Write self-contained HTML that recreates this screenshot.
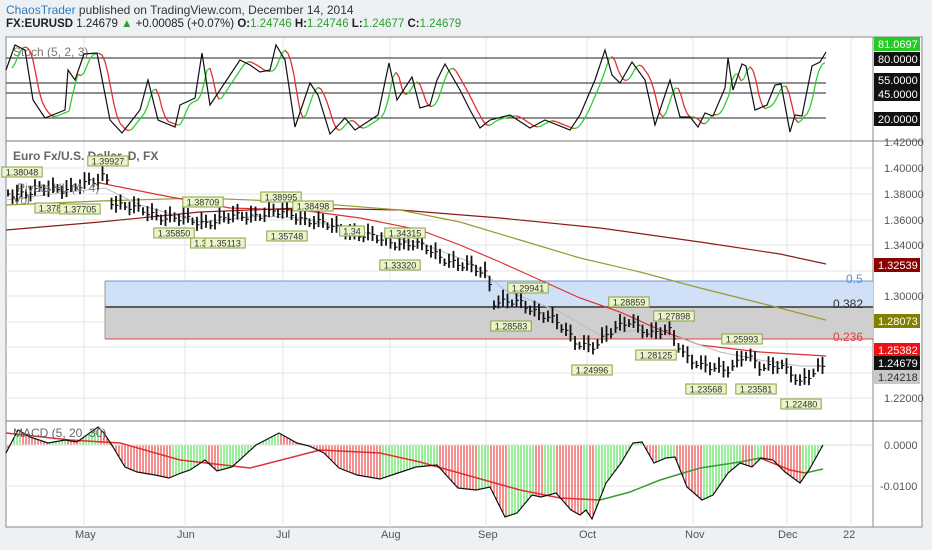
<!DOCTYPE html>
<html><head><meta charset="utf-8"><style>
body{margin:0;width:932px;height:550px;background:#eef1f4;font-family:"Liberation Sans",sans-serif;overflow:hidden;position:relative}
.h1{position:absolute;left:6px;top:3px;font-size:12px;color:#333}
.h2{position:absolute;left:6px;top:18px;font-size:11.5px;color:#222}
.g{color:#2ca02c}
svg{position:absolute;left:0;top:0}
</style></head><body>
<div class="h1"><span style="color:#2b7bbf">ChaosTrader</span> published on TradingView.com, December 14, 2014</div>
<div class="h2"><b>FX:EURUSD</b> 1.24679 <span class="g">▲</span> +0.00085 (+0.07%) <b>O:</b><span class="g">1.24746</span> <b>H:</b><span class="g">1.24746</span> <b>L:</b><span class="g">1.24677</span> <b>C:</b><span class="g">1.24679</span></div>
<svg id="s" width="932" height="550" font-family="Liberation Sans, sans-serif">
<rect x="6" y="37" width="916" height="490" fill="#fff" stroke="#888"/>
<g stroke="#e6e6e6" id="grid">
<line x1="84" y1="38" x2="84" y2="527"/><line x1="185" y1="38" x2="185" y2="527"/><line x1="283" y1="38" x2="283" y2="527"/><line x1="390" y1="38" x2="390" y2="527"/><line x1="486" y1="38" x2="486" y2="527"/><line x1="587" y1="38" x2="587" y2="527"/><line x1="693" y1="38" x2="693" y2="527"/><line x1="787" y1="38" x2="787" y2="527"/><line x1="851" y1="38" x2="851" y2="527"/>
<line x1="6" y1="168" x2="873" y2="168"/><line x1="6" y1="194" x2="873" y2="194"/><line x1="6" y1="220" x2="873" y2="220"/><line x1="6" y1="245" x2="873" y2="245"/><line x1="6" y1="271" x2="873" y2="271"/><line x1="6" y1="296" x2="873" y2="296"/><line x1="6" y1="322" x2="873" y2="322"/><line x1="6" y1="347" x2="873" y2="347"/><line x1="6" y1="373" x2="873" y2="373"/><line x1="6" y1="398" x2="873" y2="398"/>
<line x1="6" y1="486" x2="873" y2="486"/>
</g>
<line x1="873" y1="37" x2="873" y2="527" stroke="#888"/>
<line x1="6" y1="141" x2="922" y2="141" stroke="#777"/>
<line x1="6" y1="421" x2="922" y2="421" stroke="#777"/>
<g stroke="#222"><line x1="6" y1="58" x2="826" y2="58"/><line x1="6" y1="83" x2="826" y2="83"/><line x1="6" y1="93" x2="826" y2="93"/><line x1="6" y1="118" x2="826" y2="118"/></g>
<text x="13" y="56" font-size="12" fill="#777">Stoch (5, 2, 3)</text>
<g id="stoch"></g>
<rect x="105" y="281" width="768" height="26" fill="#cfe0f7"/>
<rect x="105" y="307" width="768" height="32" fill="#cfcfcf"/>
<line x1="105" y1="281" x2="873" y2="281" stroke="#6a9ae0"/>
<line x1="105" y1="307" x2="873" y2="307" stroke="#333" stroke-width="1.5"/>
<line x1="105" y1="339" x2="873" y2="339" stroke="#e04040"/>
<line x1="105" y1="281" x2="105" y2="339" stroke="#999"/>
<text x="846" y="283" font-size="12" fill="#5a8ee0">0.5</text>
<text x="833" y="308" font-size="12" fill="#333">0.382</text>
<text x="833" y="341" font-size="12" fill="#e04040">0.236</text>
<polyline fill="none" stroke="#8b1a1a" stroke-width="1.2" points="6,230 100,222 200,212 300,208 400,210 500,218 600,228 700,242 780,254 826,264"/>
<polyline fill="none" stroke="#9a9a30" stroke-width="1.2" points="6,205 100,201 200,198 300,202 400,210 460,222 520,240 580,258 640,272 700,288 760,303 826,320"/>
<polyline fill="none" stroke="#e03030" stroke-width="1.2" points="100,183 160,195 230,208 300,210 360,218 420,230 460,245 500,262 540,280 580,298 620,312 660,330 700,345 760,352 826,356"/>
<polyline fill="none" stroke="#bbb" stroke-width="1" points="6,200 60,193 105,188 140,205 200,222 260,216 300,218 360,232 420,243 470,262 505,290 560,312 600,335 640,330 680,338 720,352 760,360 800,366 826,366"/>
<g id="bars" stroke="#111" stroke-width="1.8"></g>
<text x="13" y="160" font-size="12" font-weight="bold" fill="#666">Euro Fx/U.S. Dollar, D, FX</text>
<text x="17" y="192" font-size="12" fill="#777">Pivots HL (4, 4)</text>
<text x="13" y="204" font-size="12" fill="#777">Vol</text>
<g id="piv" font-size="9" fill="#333"></g>
<g id="hist"></g>
<line x1="6" y1="445" x2="873" y2="445" stroke="#ddd"/>
<polyline fill="none" stroke="#e03030" stroke-width="1.5" points="6,433 70,440 120,443 180,460 250,468 320,450 380,453 420,462 470,476 520,490 560,498 600,500"/>
<polyline fill="none" stroke="#3a9a3a" stroke-width="1.5" points="600,500 630,492 660,480 700,468 740,462 760,458"/>
<polyline fill="none" stroke="#e03030" stroke-width="1.5" points="760,458 790,470 805,473"/>
<polyline fill="none" stroke="#3a9a3a" stroke-width="1.5" points="805,473 823,469"/>
<polyline id="macd" fill="none" stroke="#111" stroke-width="1.2" points="6,453 18,430 30,437 48,443 65,440 77,442 98,427 104,433 113,447 125,467 137,472 155,475 169,478 181,473 190,470 205,460 217,471 232,467 256,445 279,433 297,443 309,446 324,453 339,468 357,475 380,479 398,473 416,467 437,465 458,488 476,490 490,487 505,517 517,513 532,495 541,497 556,493 571,510 580,515 586,510 592,519 606,483 621,463 633,443 642,442 654,463 666,458 675,457 687,487 702,500 713,495 728,473 740,463 752,467 761,458 773,460 785,472 800,483 809,470 823,445"/>
<text x="13" y="437" font-size="12" fill="#666">MACD (5, 20, 30)</text>
<g font-size="11" fill="#555">
<text x="884" y="172">1.40000</text><text x="884" y="198">1.38000</text><text x="884" y="224">1.36000</text><text x="884" y="249">1.34000</text><text x="884" y="300">1.30000</text><text x="884" y="402">1.22000</text><text x="884" y="146">1.42000</text>
<text x="884" y="449">0.0000</text><text x="880" y="490">-0.0100</text>
<text x="75" y="538">May</text><text x="177" y="538">Jun</text><text x="276" y="538">Jul</text><text x="381" y="538">Aug</text><text x="478" y="538">Sep</text><text x="579" y="538">Oct</text><text x="685" y="538">Nov</text><text x="778" y="538">Dec</text><text x="843" y="538">22</text>
</g>
<g font-size="11" fill="#fff">
<rect x="874" y="37" width="46" height="14" fill="#22cc22"/><text x="878" y="48">81.0697</text>
<rect x="874" y="52" width="46" height="14" fill="#111"/><text x="878" y="63">80.0000</text>
<rect x="874" y="73" width="46" height="14" fill="#111"/><text x="878" y="84">55.0000</text>
<rect x="874" y="87" width="46" height="14" fill="#111"/><text x="878" y="98">45.0000</text>
<rect x="874" y="112" width="46" height="14" fill="#111"/><text x="878" y="123">20.0000</text>
<rect x="874" y="258" width="46" height="14" fill="#8b0000"/><text x="878" y="269">1.32539</text>
<rect x="874" y="314" width="46" height="14" fill="#808000"/><text x="878" y="325">1.28073</text>
<rect x="874" y="343" width="46" height="14" fill="#ee1111"/><text x="878" y="354">1.25382</text>
<rect x="874" y="356" width="46" height="14" fill="#111"/><text x="878" y="367">1.24679</text>
<rect x="874" y="370" width="46" height="14" fill="#c8c8c8"/><text x="878" y="381" fill="#333">1.24218</text>
</g>
</svg>
<script>
var NS="http://www.w3.org/2000/svg";
function el(p,t,a){var e=document.createElementNS(NS,t);for(var k in a)e.setAttribute(k,a[k]);p.appendChild(e);return e;}
function interp(pts,x){for(var i=0;i<pts.length-1;i++){if(x>=pts[i][0]&&x<=pts[i+1][0]){var t=(x-pts[i][0])/(pts[i+1][0]-pts[i][0]);return pts[i][1]+t*(pts[i+1][1]-pts[i][1]);}}return pts[pts.length-1][1];}
var st=[[6,70],[15,45],[25,50],[33,100],[45,118],[65,110],[68,70],[75,80],[84,54],[97,53],[110,120],[122,133],[140,110],[148,80],[158,120],[175,127],[180,105],[195,98],[202,53],[210,105],[240,60],[250,65],[260,72],[270,70],[276,45],[285,60],[295,127],[310,83],[318,95],[330,134],[345,118],[355,130],[378,115],[389,63],[397,100],[412,77],[420,108],[430,105],[437,80],[445,64],[460,90],[470,110],[480,128],[490,120],[510,115],[530,128],[545,120],[570,130],[580,115],[595,80],[605,50],[612,75],[620,83],[632,62],[645,80],[655,125],[670,80],[680,117],[690,117],[698,127],[705,113],[713,116],[725,88],[728,58],[733,90],[742,64],[746,66],[755,110],[767,105],[775,85],[781,84],[790,132],[795,115],[802,116],[812,66],[820,62],[826,52]];
var sg=document.getElementById("stoch");
var prev=null;
for(var x=12;x<=826;x+=3){var y=interp(st,Math.max(6,x-7));y=(y+interp(st,Math.max(6,x-4))+interp(st,Math.max(6,x-10)))/3;if(prev){el(sg,"line",{x1:x-3,y1:prev,x2:x,y2:y,stroke:y>prev?"#e03030":"#33cc33","stroke-width":1.3});}prev=y;}
el(sg,"polyline",{points:st.map(function(p){return p.join(",")}).join(" "),fill:"none",stroke:"#111","stroke-width":1.2});
var pr=[[8,193],[40,190],[60,188],[100,181],[105,170],[112,201],[150,213],[200,222],[230,217],[270,212],[290,213],[330,226],[380,239],[420,245],[460,265],[488,272],[492,300],[520,303],[550,316],[575,341],[595,345],[615,329],[630,318],[650,335],[670,329],[685,354],[700,367],[730,367],[745,355],[760,367],[780,362],[800,384],[820,364],[826,364]];
var bg=document.getElementById("bars");
var i=0;
for(var x=8;x<=824;x+=4.5){var y=interp(pr,x);var n=Math.sin(i*1.7)*3+Math.sin(i*0.6)*2;var h=7+Math.abs(Math.sin(i*2.3))*10;
el(bg,"line",{x1:x,y1:y+n-h/2,x2:x,y2:y+n+h/2});el(bg,"line",{x1:x,y1:y+n+1,x2:x+2.5,y2:y+n+1,"stroke-width":1});i++;}
var mp=document.getElementById("macd").getAttribute("points").split(" ").map(function(s){return s.split(",").map(Number)});
var hg=document.getElementById("hist");var pv=null;
for(var x=8;x<=823;x+=3){var y=interp(mp,x);var c=(pv!==null&&y<pv)?"#33dd33":"#ee2020";el(hg,"line",{x1:x,y1:445,x2:x,y2:y,stroke:c,"stroke-width":1});pv=y;}
var pv2=[["1.38048",22,172],["1.39927",108,161],["1.378",50,208],["1.37705",80,209],["1.38709",203,202],["1.38995",281,197],["1.38498",313,206],["1.35850",174,233],["1.35",203,243],["1.35113",225,243],["1.35748",287,236],["1.34",352,231],["1.34315",405,233],["1.33320",400,265],["1.29941",528,288],["1.28583",511,326],["1.28859",629,302],["1.27898",674,316],["1.28125",656,355],["1.24996",592,370],["1.25993",742,339],["1.23568",706,389],["1.23581",756,389],["1.22480",801,404]];
var pg=document.getElementById("piv");
pv2.forEach(function(p){var w=p[0].length*5.2+4;el(pg,"rect",{x:p[1]-w/2,y:p[2]-5,width:w,height:10,fill:"#eaf5cc",stroke:"#8aa040","stroke-width":1});var t=el(pg,"text",{x:p[1],y:p[2]+3.5,"text-anchor":"middle"});t.textContent=p[0];});
</script>
</body></html>
